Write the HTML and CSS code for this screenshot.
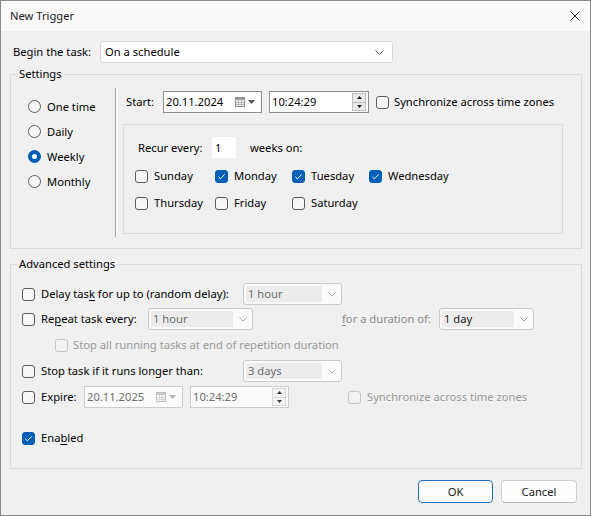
FILE: index.html
```html
<!DOCTYPE html>
<html>
<head>
<meta charset="utf-8">
<link rel="stylesheet" href="styles.css">
</head>
<body>
<div class="window">
  <div class="titlebar">
    <span class="title">New Trigger</span>
    <span class="close"><svg width="10" height="10" viewBox="0 0 10 10"><path d="M0.5 0.5 L9.5 9.5 M9.5 0.5 L0.5 9.5" stroke="#1b1b1b" stroke-width="1" fill="none"/></svg></span>
  </div>
  <div class="content">
    <div class="begin-row">
      <span class="begin-label">Begin the task:</span>
      <div class="combo-main">
        <span class="combo-text">On a schedule</span>
        <svg class="chev" width="9" height="5" viewBox="0 0 9 5"><path d="M0.5 0.5 L4.5 4.5 L8.5 0.5" stroke="#5f5f5f" fill="none"/></svg>
      </div>
    </div>

    <fieldset class="group settings">
      <legend>Settings</legend>
      <div class="settings-body">
        <div class="radios">
          <div class="radio-row"><span class="radio"></span><span>One time</span></div>
          <div class="radio-row"><span class="radio"></span><span>Daily</span></div>
          <div class="radio-row"><span class="radio on"></span><span>Weekly</span></div>
          <div class="radio-row"><span class="radio"></span><span>Monthly</span></div>
        </div>
        <div class="sched">
          <div class="start-row">
            <span class="start-label">Start:</span>
            <div class="field date">
              <span class="field-text">20.11.2024</span>
              <svg class="cal" width="10" height="10" viewBox="0 0 10 10"><rect x="0.5" y="0.5" width="9" height="9" fill="#f4f4f4" stroke="#8c8c8c"/><rect x="1" y="1" width="8" height="2" fill="#9a9a9a"/><path d="M3.5 3 V9 M6.5 3 V9 M1 5.5 H9 M1 7.5 H9" stroke="#b4b4b4"/></svg>
              <svg class="tri" width="7" height="4" viewBox="0 0 7 4"><path d="M0 0 H7 L3.5 4 Z" fill="#555"/></svg>
            </div>
            <div class="field time">
              <span class="field-text">10:24:29</span>
              <div class="spin">
                <span class="spin-btn"><svg width="5" height="3" viewBox="0 0 5 3"><path d="M0 3 H5 L2.5 0 Z" fill="#1b1b1b"/></svg></span>
                <span class="spin-btn"><svg width="5" height="3" viewBox="0 0 5 3"><path d="M0 0 H5 L2.5 3 Z" fill="#1b1b1b"/></svg></span>
              </div>
            </div>
            <span class="cb"></span>
            <span class="cb-label">Synchronize across time zones</span>
          </div>
          <div class="recur-box">
            <div class="recur-row">
              <span class="recur-label">Recur every:</span>
              <span class="recur-input">1</span>
              <span class="weeks">weeks on:</span>
            </div>
            <div class="days">
              <div class="day"><span class="cb"></span><span>Sunday</span></div>
              <div class="day"><span class="cb checked"><svg width="13" height="13" viewBox="0 0 13 13"><path d="M3.3 6.8 L5.4 8.8 L9.7 4.4" stroke="#fff" stroke-width="1" fill="none"/></svg></span><span>Monday</span></div>
              <div class="day"><span class="cb checked"><svg width="13" height="13" viewBox="0 0 13 13"><path d="M3.3 6.8 L5.4 8.8 L9.7 4.4" stroke="#fff" stroke-width="1" fill="none"/></svg></span><span>Tuesday</span></div>
              <div class="day"><span class="cb checked"><svg width="13" height="13" viewBox="0 0 13 13"><path d="M3.3 6.8 L5.4 8.8 L9.7 4.4" stroke="#fff" stroke-width="1" fill="none"/></svg></span><span>Wednesday</span></div>
              <div class="day"><span class="cb"></span><span>Thursday</span></div>
              <div class="day"><span class="cb"></span><span>Friday</span></div>
              <div class="day"><span class="cb"></span><span>Saturday</span></div>
            </div>
          </div>
        </div>
      </div>
    </fieldset>

    <fieldset class="group advanced">
      <legend>Advanced settings</legend>
      <div class="adv-body">
        <div class="adv-row r1">
          <div class="lead w-delay"><span class="cb"></span><span class="lead-text">Delay tas<u>k</u> for up to (random delay):</span></div>
          <div class="dcombo w99"><span class="dcombo-text">1 hour</span><svg class="dchev" width="8" height="5" viewBox="0 0 8 5"><path d="M0.5 0.5 L4 4 L7.5 0.5" stroke="#a8a8a8" fill="none"/></svg></div>
        </div>
        <div class="adv-row r2">
          <div class="lead w-repeat"><span class="cb"></span><span class="lead-text">Re<u>p</u>eat task every:</span></div>
          <div class="dcombo w104"><span class="dcombo-text">1 hour</span><svg class="dchev" width="8" height="5" viewBox="0 0 8 5"><path d="M0.5 0.5 L4 4 L7.5 0.5" stroke="#a8a8a8" fill="none"/></svg></div>
          <span class="dur-label"><u>f</u>or a duration of:</span>
          <div class="dcombo w95"><span class="dcombo-text dark">1 day</span><svg class="dchev" width="8" height="5" viewBox="0 0 8 5"><path d="M0.5 0.5 L4 4 L7.5 0.5" stroke="#a8a8a8" fill="none"/></svg></div>
        </div>
        <div class="adv-row r3">
          <span class="cb disabled"></span><span class="dis-text stopall">Stop all running tasks at end of repetition duration</span>
        </div>
        <div class="adv-row r4">
          <div class="lead w-delay"><span class="cb"></span><span class="lead-text">Stop task if it runs longer than:</span></div>
          <div class="dcombo w99"><span class="dcombo-text">3 days</span><svg class="dchev" width="8" height="5" viewBox="0 0 8 5"><path d="M0.5 0.5 L4 4 L7.5 0.5" stroke="#a8a8a8" fill="none"/></svg></div>
        </div>
        <div class="adv-row r5">
          <div class="lead w-expire"><span class="cb"></span><span class="lead-text">Expire:</span></div>
          <div class="field date dis">
            <span class="field-text">20.11.2025</span>
            <svg class="cal" width="10" height="10" viewBox="0 0 10 10"><rect x="0.5" y="0.5" width="9" height="9" fill="#f7f7f7" stroke="#c2c2c2"/><rect x="1" y="1" width="8" height="2" fill="#cacaca"/><path d="M3.5 3 V9 M6.5 3 V9 M1 5.5 H9 M1 7.5 H9" stroke="#d6d6d6"/></svg>
            <svg class="tri" width="7" height="4" viewBox="0 0 7 4"><path d="M0 0 H7 L3.5 4 Z" fill="#b0b0b0"/></svg>
          </div>
          <div class="field time dis">
            <span class="field-text">10:24:29</span>
            <div class="spin">
              <span class="spin-btn"><svg width="5" height="3" viewBox="0 0 5 3"><path d="M0 3 H5 L2.5 0 Z" fill="#3a3a3a"/></svg></span>
              <span class="spin-btn"><svg width="5" height="3" viewBox="0 0 5 3"><path d="M0 0 H5 L2.5 3 Z" fill="#3a3a3a"/></svg></span>
            </div>
          </div>
          <span class="cb disabled sync2"></span><span class="dis-text sync2-label">Synchronize across time zones</span>
        </div>
        <div class="adv-row r6">
          <span class="cb checked"><svg width="13" height="13" viewBox="0 0 13 13"><path d="M3.3 6.8 L5.4 8.8 L9.7 4.4" stroke="#fff" stroke-width="1" fill="none"/></svg></span>
          <span class="lead-text">Ena<u>b</u>led</span>
        </div>
      </div>
    </fieldset>

    <div class="buttons">
      <button class="btn ok">OK</button>
      <button class="btn">Cancel</button>
    </div>
  </div>
</div>
</body>
</html>
```
FILE: styles.css
```css
* { box-sizing: border-box; }
html, body { margin: 0; padding: 0; }
body {
  font-family: "Noto Sans", sans-serif;
  font-size: 11.2px;
  line-height: 16px;
  color: #000;
  background: #f0f0f0;
}
u { text-decoration: underline; text-underline-offset: 2px; }

.window {
  width: 591px;
  height: 516px;
  border: 1px solid #8a8a8a;
  background: #f0f0f0;
  display: flex;
  flex-direction: column;
}

.titlebar {
  height: 30px;
  background: #fafafa;
  display: flex;
  align-items: center;
  justify-content: space-between;
  padding: 0 10px 0 9px;
  flex: none;
}
.title { color: #1b1b1b; }
.close { display: flex; width: 10px; height: 10px; margin-top: -1px; }

.content {
  padding: 0 8px 0 9px;
  display: flex;
  flex-direction: column;
}

.begin-row {
  display: flex;
  align-items: center;
  height: 22px;
  margin-top: 10px;
}
.begin-label { width: 90px; padding-left: 3px; }
.combo-main {
  width: 293px;
  height: 22px;
  background: #fff;
  border: 1px solid #d6d6d6;
  border-radius: 3px;
  display: flex;
  align-items: center;
  justify-content: space-between;
  padding: 0 8px 0 4px;
}
.chev { display: block; }

.group {
  margin: 0;
  padding: 0;
  border: 1px solid #dcdcdc;
  min-width: 0;
}
.group legend {
  padding: 0 2px;
  margin-left: 6px;
  line-height: 16px;
}
.settings { margin-top: 3px; padding-bottom: 11px; }
.settings-body { display: flex; padding-top: 6px; }
.radios { width: 104px; padding-top: 6px; padding-left: 17px; }
.radio-row { height: 25px; display: flex; align-items: center; gap: 6px; }
.radio {
  width: 13px; height: 13px;
  border: 1px solid #5c5c5c;
  border-radius: 50%;
  background: #f7f7f7;
  flex: none;
}
.radio.on {
  background: #fff;
  border: 4px solid #005fb8;
}

.sched {
  border-left: 1px solid #a0a0a0;
  box-shadow: inset 1px 0 0 #ffffff;
  padding-left: 7px;
  padding-bottom: 3px;
}
.start-row {
  display: flex;
  align-items: center;
  height: 22px;
  margin-top: 3px;
}
.start-label { width: 40px; padding-left: 3px; }

.field {
  height: 22px;
  background: #fff;
  border: 1px solid #8e8e8e;
  display: flex;
  align-items: center;
  padding-left: 2px;
  flex: none;
}
.field-text { flex: 1; }
.field.date { width: 99px; padding-right: 6px; }
.field.date .cal { margin-right: 3px; }
.field.time { width: 100px; margin-left: 7px; padding-right: 2px; }
.field.dis { background: #fbfbfb; border-color: #cdcdcd; color: #6d6d6d; }
.field.time.dis { width: 99px; }

.spin {
  width: 14px;
  height: 18px;
  display: flex;
  flex-direction: column;
  gap: 0;
}
.spin-btn {
  flex: 1;
  display: flex;
  align-items: center;
  justify-content: center;
  background: #e9e9e9;
  border: 1px solid #bdbdbd;
}
.spin-btn + .spin-btn { border-top: none; }
.field.dis .spin-btn { background: #f3f3f3; border-color: #d6d6d6; }

.cb {
  width: 13px; height: 13px;
  border: 1px solid #5c5c5c;
  border-radius: 3px;
  background: #f7f7f7;
  flex: none;
  display: block;
}
.cb svg { display: block; margin: -1px; }
.cb.checked { background: #005fb8; border-color: #005fb8; }
.cb.disabled { border-color: #c6c6c6; background: #f3f3f3; }
.start-row .cb { margin-left: 7px; margin-right: 5px; }

.recur-box {
  width: 440px;
  height: 110px;
  margin-top: 11px;
  border: 1px solid #dcdcdc;
  padding-top: 12px;
}
.recur-row { display: flex; align-items: center; height: 21px; }
.recur-label { width: 88px; padding-left: 14px; }
.recur-input {
  width: 24px; height: 21px;
  background: #fff;
  padding-left: 3px;
  line-height: 21px;
}
.weeks { margin-left: 14px; }
.days {
  display: grid;
  grid-template-columns: 80px 77px 77px auto;
  grid-auto-rows: 20px;
  row-gap: 7px;
  margin-top: 8px;
  padding-left: 11px;
}
.day { display: flex; align-items: center; gap: 6px; }

.advanced { margin-top: 7px; padding-bottom: 19px; }
.adv-body { padding-top: 11px; padding-left: 11px; }
.adv-row { display: flex; align-items: center; height: 22px; }
.r2 { margin-top: 3px; }
.r3 { margin-top: 4px; }
.r4 { margin-top: 4px; }
.r5 { margin-top: 4px; }
.r6 { margin-top: 19px; gap: 6px; }
.lead { display: flex; align-items: center; gap: 6px; flex: none; }
.w-delay { width: 221px; }
.w-repeat { width: 126px; }
.w-expire { width: 62px; }

.dcombo {
  height: 22px;
  border: 1px solid #cbcbcb;
  border-radius: 3px;
  background: #fafafa;
  display: flex;
  align-items: center;
  padding: 2px 0 2px 2px;
  flex: none;
}
.dcombo-text {
  flex: 1;
  height: 16px;
  background: #ececec;
  color: #6d6d6d;
  padding-left: 2px;
  line-height: 16px;
}
.dcombo-text.dark { color: #1b1b1b; }
.dchev { margin: 0 5px 0 6px; display: block; }
.w99 { width: 99px; }
.w104 { width: 105px; }
.w95 { width: 95px; }
.dur-label { color: #8a8a8a; margin-left: 89px; width: 97px; }

.dis-text { color: #9a9a9a; }
.r3 .cb { margin-left: 33px; margin-right: 5px; }
.sync2 { margin-left: 59px; margin-right: 6px; }

.buttons {
  display: flex;
  justify-content: flex-end;
  gap: 8px;
  margin-top: 11px;
  margin-right: 5px;
}
.btn {
  font: inherit;
  color: #1b1b1b;
  height: 23px;
  width: 76px;
  background: #fdfdfd;
  border: 1px solid #d0d0d0;
  border-bottom-color: #b8b8b8;
  border-radius: 4px;
  padding: 0;
}
.btn.ok { width: 75px; border: 1px solid #1a73c4; }
```
